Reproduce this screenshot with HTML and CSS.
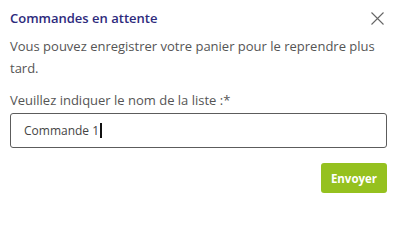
FILE: index.html
```html
<!DOCTYPE html>
<html lang="fr">
<head>
<meta charset="utf-8">
<link rel="stylesheet" href="styles.css">
</head>
<body>
<div class="dialog">
  <div class="header">
    <h2 class="title">Commandes en attente</h2>
    <button class="close" aria-label="Fermer">
      <svg width="13" height="13" viewBox="0 0 13 13"><path d="M0.5 0.5 L12.5 12.5 M12.5 0.5 L0.5 12.5" stroke="#666" stroke-width="1.1" fill="none"/></svg>
    </button>
  </div>
  <p class="intro">Vous pouvez enregistrer votre panier pour le reprendre plus tard.</p>
  <label class="label" for="nom">Veuillez indiquer le nom de la liste :*</label>
  <div class="input"><span class="value">Commande 1</span><span class="caret"></span></div>
  <div class="actions"><button class="send">Envoyer</button></div>
</div>
</body>
</html>
```
FILE: styles.css
```css
html, body { margin: 0; padding: 0; background: #fff; }
body { font-family: "Open Sans", "Noto Sans", sans-serif; color: #555; }
.dialog { width: 397px; height: 210px; box-sizing: border-box; padding: 9px 10px 0 10px; }
.header { display: flex; justify-content: space-between; align-items: center; height: 18px; }
.title { margin: 0; font-size: 13px; font-weight: 600; color: #2d2a7c; line-height: 18px; }
.close { border: 0; background: none; padding: 0; margin-right: 3px; width: 13px; height: 13px; display: flex; margin-top: 1px; }
.intro { margin: 8px 0 0 0; font-size: 13px; line-height: 22px; color: #555; }
.label { display: block; margin-top: 12px; font-size: 13px; line-height: 18px; color: #555; }
.input { margin-top: 4px; height: 35px; box-sizing: border-box; border: 1px solid #5c5c5c; border-radius: 3px; display: flex; align-items: center; padding-left: 13px; font-size: 12px; color: #444; }
.caret { display: inline-block; width: 1.5px; height: 15px; background: #111; margin-left: 1px; }
.actions { display: flex; justify-content: flex-end; margin-top: 15px; }
.send { border: 0; background: #95c11f; color: #fff; font-family: inherit; font-weight: 700; font-size: 11.5px; width: 66px; height: 30px; border-radius: 3px; padding: 0; }
```
